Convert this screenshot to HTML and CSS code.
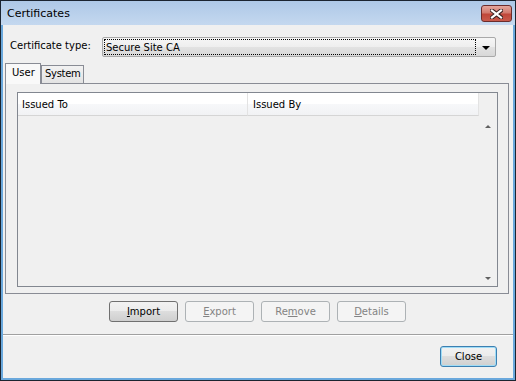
FILE: index.html
```html
<!DOCTYPE html>
<html lang="en">
<head>
    <meta charset="UTF-8">
    <meta name="viewport" content="width=device-width, initial-scale=1.0">
    <title>Certificates</title>
    <link rel="stylesheet" href="styles.css">
</head>
<body>
    <div class="window">
        <div class="titlebar">
            <span class="title">Certificates</span>
            <div class="close-x">
                <svg width="13" height="10" viewBox="0 0 13 10">
                    <path d="M2 1.5 L11 8.5 M11 1.5 L2 8.5" stroke="#3a2222" stroke-width="4.2" stroke-linecap="square"/>
                    <path d="M2 1.5 L11 8.5 M11 1.5 L2 8.5" stroke="#ffffff" stroke-width="2.2" stroke-linecap="square"/>
                </svg>
            </div>
        </div>
        <div class="client">
            <div class="type-row">
                <label class="type-label">Certificate type:</label>
                <div class="combo">
                    <div class="combo-focus">Secure Site CA</div>
                    <div class="combo-arrow"></div>
                </div>
            </div>
            <div class="tabs">
                <div class="tab active">User</div>
                <div class="tab">System</div>
            </div>
            <div class="tab-panel">
                <div class="listview">
                    <div class="lv-header">
                        <div class="col col-to">Issued To</div>
                        <div class="col col-by">Issued By</div>
                    </div>
                    <div class="lv-body">
                        <div class="lv-rows"></div>
                        <div class="scrollbar">
                            <span class="arrow arrow-up"></span>
                            <span class="arrow arrow-down"></span>
                        </div>
                    </div>
                </div>
            </div>
            <div class="actions">
                <button class="btn"><u>I</u>mport</button>
                <button class="btn" disabled><u>E</u>xport</button>
                <button class="btn" disabled>Re<u>m</u>ove</button>
                <button class="btn" disabled><u>D</u>etails</button>
            </div>
            <div class="separator"></div>
            <div class="footer">
                <button class="btn btn-default">Close</button>
            </div>
        </div>
    </div>
</body>
</html>
```

FILE: styles.css
```css
* {
  box-sizing: border-box;
  font-family: "DejaVu Sans", Verdana, sans-serif;
  font-size: 10px;
  color: #000;
}

body {
  margin: 0;
}

.window {
  width: 516px;
  height: 381px;
  border: 1px solid #1b2430;
  background-color: #6aa8dc;
  display: flex;
  flex-direction: column;
}

/* barra de titulo */
.titlebar {
  height: 24px;
  display: flex;
  align-items: flex-start;
  background: linear-gradient(#aec8e7, #c4d8ef);
}

.title {
  flex-grow: 1;
  padding: 6px 0 0 6px;
  font-size: 11px;
}

.close-x {
  width: 31px;
  height: 17px;
  margin: 4px 3px 0 0;
  border: 1px solid #6b2c2c;
  border-radius: 3px;
  background: linear-gradient(#e4a69c 0%, #d27a6e 45%, #c0473a 55%, #c95a4c 100%);
  display: flex;
  align-items: center;
  justify-content: center;
}

.close-x svg {
  display: block;
}

.client {
  flex-grow: 1;
  margin: 0 2px 2px 2px;
  background-color: #f0f0f0;
  display: flex;
  flex-direction: column;
}

/* tipo de certificado */
.type-row {
  display: flex;
  align-items: center;
  margin-top: 12px;
  height: 20px;
}

.type-label {
  width: 92px;
  margin-left: 7px;
  padding-bottom: 3px;
}

.combo {
  flex-grow: 1;
  height: 20px;
  margin-right: 17px;
  border: 1px solid #a9a9a9;
  border-radius: 2px;
  background: linear-gradient(#f6f6f6 0%, #eeeeee 50%, #e2e2e2 50%, #d8d8d8 100%);
  display: flex;
  align-items: center;
  padding: 0 5px 0 1px;
}

.combo-focus {
  width: 372px;
  height: 16px;
  border: 1px dotted #000;
  padding: 2px 0 0 1px;
}

.combo-arrow {
  margin-left: auto;
  width: 0;
  height: 0;
  border-left: 4px solid transparent;
  border-right: 4px solid transparent;
  border-top: 4px solid #000;
  margin-top: 2px;
}

/* abas */
.tabs {
  display: flex;
  align-items: flex-end;
  height: 20px;
  margin: 6px 0 0 2px;
}

.tab {
  height: 18px;
  width: 43px;
  padding: 2px 0 0 3px;
  border: 1px solid #898c95;
  border-bottom: none;
  background: linear-gradient(#f2f2f2, #e3e3e3);
  letter-spacing: -0.3px;
  white-space: nowrap;
}

.tab.active {
  height: 21px;
  margin-bottom: -1px;
  padding: 3px 0 0 6px;
  width: 36px;
  background: #f9f9f9;
  letter-spacing: 0;
  position: relative;
  z-index: 1;
}

.tab-panel {
  height: 211px;
  margin: 0 4px 0 2px;
  border: 1px solid #898c95;
  background-color: #f0f0f0;
  padding: 8px 10px 6px 11px;
}

/* lista */
.listview {
  height: 195px;
  border: 1px solid #828790;
  display: flex;
  flex-direction: column;
}

.lv-header {
  display: flex;
  height: 23px;
  padding-right: 18px;
}

.col {
  height: 23px;
  padding: 6px 0 0 4px;
  background: linear-gradient(#ffffff 0%, #ffffff 50%, #f7f8fa 50%, #f1f2f4 100%);
  border-bottom: 1px solid #d5d5d5;
  border-right: 1px solid #e3e3e3;
}

.col-to {
  width: 230px;
}

.col-by {
  width: 231px;
  padding-left: 5px;
}

.lv-body {
  flex-grow: 1;
  display: flex;
}

.lv-rows {
  flex-grow: 1;
}

.scrollbar {
  width: 18px;
  display: flex;
  flex-direction: column;
  justify-content: space-between;
  align-items: center;
  padding: 9px 0 6px 0;
}

.arrow {
  width: 0;
  height: 0;
  border-left: 3px solid transparent;
  border-right: 3px solid transparent;
}

.arrow-up {
  border-bottom: 3px solid #606060;
}

.arrow-down {
  border-top: 3px solid #606060;
}

/* botoes */
.actions {
  display: flex;
  justify-content: center;
  gap: 7px;
  margin-top: 7px;
  height: 21px;
  padding-right: 1px;
}

.btn {
  width: 69px;
  height: 21px;
  padding: 0;
  border: 1px solid #707070;
  border-radius: 3px;
  background: linear-gradient(#f2f2f2 0%, #ebebeb 50%, #dddddd 50%, #cfcfcf 100%);
  font-size: 10px;
}

.btn u {
  font-size: 10px;
}

.btn:disabled {
  border-color: #adb2b5;
  background: #f4f4f4;
  color: #838383;
}

.btn:disabled u {
  color: #838383;
}

.separator {
  margin-top: 12px;
  height: 2px;
  border-top: 1px solid #a0a0a0;
  border-bottom: 1px solid #ffffff;
}

.footer {
  display: flex;
  justify-content: flex-end;
  margin-top: 10px;
  padding-right: 16px;
}

.btn-default {
  width: 57px;
  border-color: #3c7fb1;
  box-shadow: inset 0 0 0 1px #9fdcf6;
}
```
